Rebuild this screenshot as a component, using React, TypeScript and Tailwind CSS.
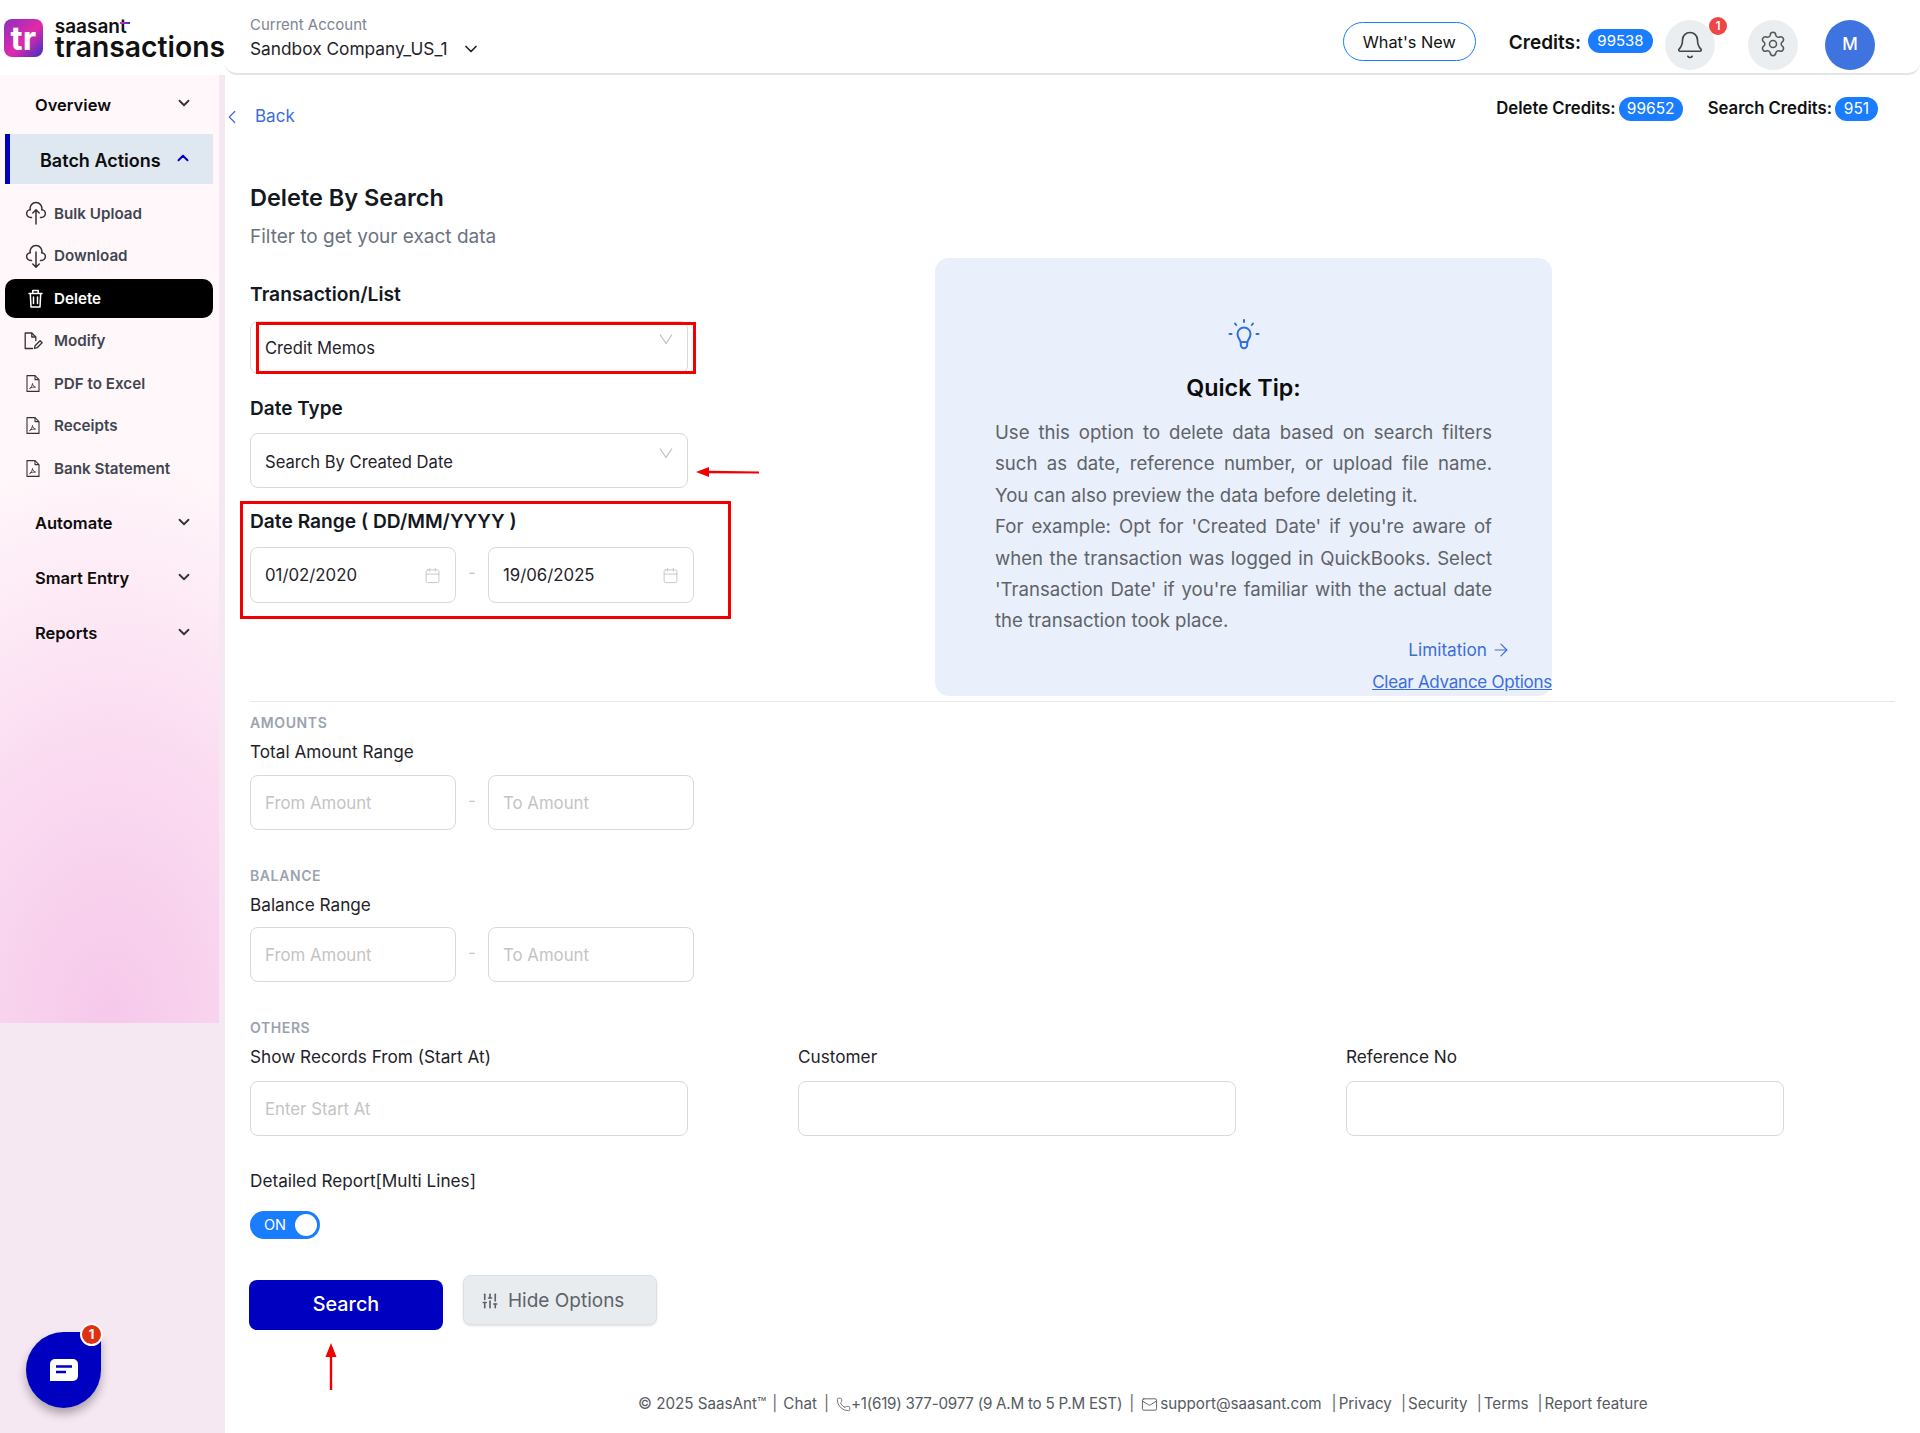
import { Bell, ChevronDown, ChevronLeft, ChevronUp, Calendar, Mail, Phone, Settings, SlidersVertical, ArrowRight } from "lucide-react"
import type { ReactNode } from "react"

const font = "font-['Inter','Liberation_Sans',sans-serif]"

function PdfIcon() {
  return (
    <svg width="14" height="17" viewBox="0 0 14 17" fill="none" stroke="#333" strokeWidth="1.1" strokeLinejoin="round">
      <path d="M1 .6h8l4 4v11.800H1z" />
      <path d="M9 .6v4h4" />
      <path d="M3.600 13.500c1.500-.9 2.800-3.200 2.900-5 .2 1.800 1.200 3.200 3 3.600-2-.2-4.100.2-5.900 1.400z" strokeWidth="0.9" />
    </svg>
  )
}

function CloudIcon({ up }: { up: boolean }) {
  return (
    <svg width="20" height="24" viewBox="0 0 20 24" fill="none" stroke="#333" strokeWidth="1.500" strokeLinecap="round" strokeLinejoin="round">
      <path d="M5.500 16.500H4.800a3.900 3.900 0 0 1-.5-7.800A5.800 5.800 0 0 1 10 1.500a5.800 5.800 0 0 1 5.700 7.200 3.900 3.900 0 0 1-.5 7.800h-.7" />
      {up ? <path d="M10 23V9M6.800 12 10 8.800l3.200 3.200" /> : <path d="M10 8v15M6.800 20 10 23.200l3.200-3.200" />}
    </svg>
  )
}

function TrashIcon() {
  return (
    <svg className="ml-[2px]" width="15" height="19" viewBox="0 0 15 19" fill="none" stroke="#fff" strokeWidth="1.500" strokeLinecap="round" strokeLinejoin="round">
      <path d="M1 4.500h13M4.800 4.500V1.500h5.400v3M2.300 4.500l.7 13.500h9l.7-13.500M5.500 8v6.500M9.500 8v6.500" />
    </svg>
  )
}

function ModifyIcon() {
  return (
    <svg className="ml-[-2px]" width="19" height="18" viewBox="0 0 19 18" fill="none" stroke="#333" strokeWidth="1.300" strokeLinejoin="round">
      <path d="M9 16.500H1.200V1h6.600l4 4v4" />
      <path d="M7.800 1v4h4" />
      <path d="M10.500 16.500l.6-2.800 5-5 2 2-5 5z" />
    </svg>
  )
}

function BulbIcon() {
  return (
    <svg width="32" height="32" viewBox="0 0 32 32" fill="none" stroke="#2f6fe0" strokeWidth="2" strokeLinecap="round" strokeLinejoin="round">
      <path d="M12.500 23c0-2.500-3-3.800-3-8a6.500 6.500 0 0 1 13 0c0 4.200-3 5.500-3 8z" />
      <path d="M12.800 23v3a3.200 3.200 0 0 0 6.400 0v-3" />
      <path d="M16 1v2M7 4.500l1.200 1.500M25 4.500 23.800 6M1.500 15h2M28.500 15h2" />
    </svg>
  )
}

function RowLabel({ children, className = "" }: { children: ReactNode; className?: string }) {
  return <div className={"h-[26px] leading-[26px] text-[17.200px] text-[#1f2329] " + className}>{children}</div>
}

function Section({ children, className = "" }: { children: ReactNode; className?: string }) {
  return <div className={"h-[18px] leading-[18px] text-[14px] font-semibold tracking-[0.6px] text-[#9aa3af] " + className}>{children}</div>
}

function TextBox({ placeholder, className = "" }: { placeholder?: string; className?: string }) {
  return (
    <div className={"flex items-center rounded-[8px] border border-[#d9d9d9] bg-white px-[14px] pt-[3px] text-[16.800px] text-[#c4c4c4] " + className}>
      {placeholder}
    </div>
  )
}

function SelectBox({ value, className = "", chevron = "top-[11px]" }: { value: string; className?: string; chevron?: string }) {
  return (
    <div className={"relative flex w-[438px] items-center rounded-[8px] border border-[#d9d9d9] bg-white px-[14px] text-[16.600px] text-[#1f2329] " + className}>
      {value}
      <svg className={"absolute right-[14px] " + chevron} width="14" height="12" viewBox="0 0 14 12" fill="none" stroke="#bfbfbf" strokeWidth="1.200">
        <path d="M1 1.500 7 10.500 13 1.500" />
      </svg>
    </div>
  )
}

function RangeRow({ a, b }: { a: string; b: string }) {
  return (
    <div className="flex items-center">
      <TextBox placeholder={a} className="h-[55px] w-[206px]" />
      <div className="flex w-[32px] justify-center pb-[6px] text-[#c4c4c4]">-</div>
      <TextBox placeholder={b} className="h-[55px] w-[206px]" />
    </div>
  )
}

function DateBox({ value }: { value: string }) {
  return (
    <div className="flex h-[56px] w-[206px] items-center justify-between rounded-[8px] border border-[#d9d9d9] bg-white pl-[14px] pr-[14px] text-[16.800px] text-[#1f2329]">
      <span className="pt-[2px]">{value}</span>
      <Calendar size={17} strokeWidth={1.300} className="text-[#c4c4c4]" />
    </div>
  )
}

function NavHead({ label }: { label: string }) {
  return (
    <div className="flex h-[50px] items-center justify-between pl-[35px] pr-[26px] text-[16.500px] font-semibold text-[#0c0c0c]">
      {label}
      <ChevronDown size={18} strokeWidth={2.400} className="mb-[4px] text-[#333]" />
    </div>
  )
}

function SubItem({ icon, label, active = false }: { icon: ReactNode; label: string; active?: boolean }) {
  return (
    <div className={"mx-[5px] flex h-[38.500px] w-[208px] items-center rounded-[10px] text-[15.200px] font-semibold " + (active ? "bg-black text-white" : "text-[#3f4650]")}>
      <div className="flex w-[49px] justify-start pl-[21px]">{icon}</div>
      <span className="pt-[2px]">{label}</span>
    </div>
  )
}

function Pill({ children, className = "" }: { children: ReactNode; className?: string }) {
  return <span className={"flex items-center justify-center rounded-full bg-[#1a7cff] font-normal text-white " + className}>{children}</span>
}

export default function App() {
  return (
    <div className={"relative flex h-[1433px] w-[1920px] flex-col overflow-hidden bg-white " + font}>
      <header className="flex h-[75px] shrink-0">
        <div className="flex w-[225px] items-start pl-[4px] pt-[19px]">
          <div className="flex h-[38px] w-[39px] items-center justify-center rounded-[8px] bg-[linear-gradient(135deg,#8b2fc0,#e22aa8_55%,#3a2fc8)] text-[33px] font-bold leading-none text-white">tr</div>
          <div className="ml-[12px] mt-[-1px] flex flex-col">
            <span className="relative h-[17px] w-[74px] text-[19px] font-semibold leading-[17px] text-[#111]">
              saasant
              <span className="absolute left-[65px] top-[4px] h-[2px] w-[10px] bg-[linear-gradient(90deg,#e22aa8,#3a2fc8)]" />
            </span>
            <span className="mt-[1px] h-[23px] text-[28.300px] font-semibold leading-[23px] text-[#111]">transactions</span>
          </div>
        </div>
        <div className="flex flex-1 items-start justify-between rounded-b-[12px] border-b-2 border-[#e5e5e5] pl-[25px] pr-[45px]">
          <div className="pt-[14px]">
            <div className="h-[22px] text-[15px] leading-[22px] text-[#7d8590]">Current Account</div>
            <div className="flex h-[26px] items-center text-[17.300px] text-[#1f2329]">
              Sandbox Company_US_1
              <ChevronDown size={20} strokeWidth={2} className="ml-[13px]" />
            </div>
          </div>
          <div className="flex items-start pt-[20px]">
            <div className="ml-[1px] mt-[2px] flex h-[39px] w-[133px] items-center justify-center rounded-full border border-[#1a7cff] pt-[2px] text-[16.300px] text-[#111]">What&apos;s New</div>
            <span className="ml-[33px] mt-[11px] text-[19px] font-semibold leading-[24px] text-[#111]">Credits:</span>
            <Pill className="ml-[7px] mt-[9px] h-[24px] w-[65px] text-[15px]">99538</Pill>
            <div className="relative ml-[12px] flex h-[50px] w-[50px] items-center justify-center rounded-full bg-[#ebeef0]">
              <Bell size={30} strokeWidth={1.300} className="text-[#444]" />
              <span className="absolute right-[-12px] top-[-3px] flex h-[18px] w-[18px] items-center justify-center rounded-full bg-[#f04545] text-[12px] font-semibold text-white">1</span>
            </div>
            <div className="ml-[33px] flex h-[50px] w-[50px] items-center justify-center rounded-full bg-[#ebeef0] pb-[2px]">
              <Settings size={28} strokeWidth={1.300} className="text-[#555]" />
            </div>
            <div className="ml-[27px] flex h-[50px] w-[50px] items-center justify-center rounded-full bg-[#3f73e0] text-[17px] font-medium text-white">M</div>
          </div>
        </div>
      </header>

      <div className="flex min-h-0 flex-1">
        <aside className="w-[225px] shrink-0 bg-[#f6e8f3]">
          <div className="h-[948px] w-[219px] bg-[radial-gradient(ellipse_170%_60%_at_50%_100%,#f6c8ea_0%,#fbdef2_55%,#fff7fa_100%)] pt-[5px]">
            <NavHead label="Overview" />
            <div className="ml-[5px] mt-[4px] flex h-[50px] w-[208px] items-center justify-between border-l-[5px] border-[#0000c0] bg-[#dfe7f1] pl-[30px] pr-[21px] pt-[2px] text-[18px] font-semibold text-[#0c0c0c]">
              Batch Actions
              <ChevronUp size={18} strokeWidth={2.600} className="mb-[4px] text-[#0000c0]" />
            </div>
            <div className="mt-[10px] flex flex-col gap-[4px]">
              <SubItem icon={<CloudIcon up />} label="Bulk Upload" />
              <SubItem icon={<CloudIcon up={false} />} label="Download" />
              <SubItem icon={<TrashIcon />} label="Delete" active />
              <SubItem icon={<ModifyIcon />} label="Modify" />
              <SubItem icon={<PdfIcon />} label="PDF to Excel" />
              <SubItem icon={<PdfIcon />} label="Receipts" />
              <SubItem icon={<PdfIcon />} label="Bank Statement" />
            </div>
            <div className="mt-[11px] flex flex-col gap-[5px]">
              <NavHead label="Automate" />
              <NavHead label="Smart Entry" />
              <NavHead label="Reports" />
            </div>
          </div>
        </aside>

        <main className="min-w-0 flex-1 pl-[25px] pr-[25px]">
          <div className="flex h-[108px] items-start justify-between pt-[21px] pr-[17px]">
            <div className="ml-[-29px] mt-[8px] flex h-[26px] items-center text-[17px] text-[#3b6ed9]">
              <ChevronLeft size={22} strokeWidth={1.300} />
              <span className="ml-[12px]">Back</span>
            </div>
            <div className="flex items-center text-[16.700px] font-semibold text-[#111]">
              Delete Credits:
              <Pill className="ml-[3px] h-[24px] w-[64px] text-[15.500px]">99652</Pill>
              <span className="ml-[25px]">Search Credits:</span>
              <Pill className="ml-[3px] h-[24px] w-[43px] text-[15.500px]">951</Pill>
            </div>
          </div>

          <div className="flex border-b border-[#e8e8e8] pb-[5px]">
            <div className="w-[685px] shrink-0">
              <h1 className="h-[30px] text-[23.500px] font-semibold leading-[30px] text-[#14181f]">Delete By Search</h1>
              <p className="mt-[11px] h-[26px] text-[19px] leading-[26px] text-[#6b7280]">Filter to get your exact data</p>
              <div className="mt-[31px] h-[26px] text-[19.300px] font-semibold leading-[26px] text-[#14181f]">Transaction/List</div>
              <SelectBox value="Credit Memos" className="mt-[14px] h-[53px] pt-[2px]" />
              <div className="mt-[22px] h-[26px] text-[19px] font-semibold leading-[26px] text-[#14181f]">Date Type</div>
              <SelectBox value="Search By Created Date" chevron="top-[13px]" className="mt-[11px] h-[55px] pt-[4px]" />
              <div className="mt-[20px] h-[26px] text-[19.200px] font-semibold leading-[26px] text-[#14181f]">Date Range ( DD/MM/YYYY )</div>
              <div className="mt-[13px] flex items-center">
                <DateBox value="01/02/2020" />
                <div className="flex w-[32px] justify-center pb-[6px] text-[#c4c4c4]">-</div>
                <DateBox value="19/06/2025" />
              </div>
            </div>
            <div className="mt-[75px] h-[438px] w-[617px] rounded-[14px] bg-[#e9effb]">
              <div className="flex justify-center pt-[61px]">
                <BulbIcon />
              </div>
              <div className="mt-[21px] text-center text-[23.300px] font-semibold leading-[32px] text-[#0c0c0c]">Quick Tip:</div>
              <div className="mx-[60px] mt-[13px] text-justify text-[18.600px] leading-[31.400px] text-[#5f6368]">
                Use this option to delete data based on search filters such as date, reference number, or upload file name. You can also preview the data before deleting it.
                <br />
                For example: Opt for &apos;Created Date&apos; if you&apos;re aware of when the transaction was logged in QuickBooks. Select &apos;Transaction Date&apos; if you&apos;re familiar with the actual date the transaction took place.
              </div>
              <div className="mr-[41px] flex items-center justify-end text-[17.200px] leading-[26px] text-[#3b6ed9]">
                Limitation
                <ArrowRight size={20} strokeWidth={1.400} className="ml-[4px]" />
              </div>
              <div className="mt-[6px] text-right text-[17px] leading-[26px] tracking-[-0.26px] text-[#3b6ed9] underline">Clear Advance Options</div>
            </div>
          </div>

          <Section className="mt-[12px]">AMOUNTS</Section>
          <RowLabel className="mt-[7px]">Total Amount Range</RowLabel>
          <div className="mt-[10px]"><RangeRow a="From Amount" b="To Amount" /></div>
          <Section className="mt-[37px]">BALANCE</Section>
          <RowLabel className="mt-[7px]">Balance Range</RowLabel>
          <div className="mt-[9px]"><RangeRow a="From Amount" b="To Amount" /></div>
          <Section className="mt-[37px]">OTHERS</Section>
          <div className="mt-[7px] grid w-[1535px] grid-cols-[438px_438px_438px] gap-x-[110px]">
            <RowLabel>Show Records From (Start At)</RowLabel>
            <RowLabel>Customer</RowLabel>
            <RowLabel>Reference No</RowLabel>
            <TextBox placeholder="Enter Start At" className="mt-[11px] h-[55px]" />
            <TextBox className="mt-[11px] h-[55px]" />
            <TextBox className="mt-[11px] h-[55px]" />
          </div>
          <RowLabel className="mt-[32px]">Detailed Report[Multi Lines]</RowLabel>
          <div className="mt-[17px] flex h-[28px] w-[70px] items-center justify-between rounded-full bg-[#1a7cff] pl-[14px] pr-[3px] text-[14.500px] text-white">
            ON
            <span className="h-[22px] w-[22px] rounded-full bg-white" />
          </div>
          <div className="mt-[36px] flex items-start">
            <button className="ml-[-1px] mt-[5px] h-[50px] w-[194px] rounded-[8px] bg-[#0000c0] text-[19.800px] font-medium text-white">Search</button>
            <button className="ml-[20px] flex h-[50px] w-[194px] items-center rounded-[8px] border border-[#dde0e3] bg-[#e9ecef] pl-[17px] pt-[2px] text-[19px] text-[#5c636a] shadow-sm">
              <SlidersVertical size={18} strokeWidth={2.200} className="mr-[9px]" />
              Hide Options
            </button>
          </div>
          <footer className="ml-[388px] mt-[61px] flex h-[26px] items-center whitespace-nowrap text-[15.200px] text-[#555b63]">
            © 2025 SaasAnt™ <span className="mx-[6px] text-[#666]">|</span> Chat <span className="mx-[7px] text-[#666]">|</span>
            <Phone size={15} strokeWidth={1.300} />
            <span className="tracking-[-0.25px]">+1(619) 377-0977 (9 A.M to 5 P.M EST)</span>
            <span className="mx-[7px] text-[#666]">|</span>
            <Mail size={17} strokeWidth={1.300} className="mr-[2px]" />support@saasant.com
            <span className="ml-[10px] mr-[2px] text-[#666]">|</span>Privacy
            <span className="ml-[9px] mr-[2px] text-[#666]">|</span>Security
            <span className="ml-[9px] mr-[2px] text-[#666]">|</span>Terms
            <span className="ml-[9px] mr-[2px] text-[#666]">|</span>Report feature
          </footer>
        </main>
      </div>

      {/* red markup drawn over the page */}
      <div className="pointer-events-none absolute left-[256px] top-[322px] h-[52px] w-[440px] border-[3px] border-[#f00000]" />
      <div className="pointer-events-none absolute left-[240px] top-[501px] h-[118px] w-[491px] border-[3px] border-[#f00000]" />
      <svg className="pointer-events-none absolute left-[696px] top-[465px]" width="64" height="14" viewBox="0 0 64 14" fill="#f00000">
        <path d="M0 7 13 2v3.800L63 6.500v2L13 8.300V12z" />
      </svg>
      <svg className="pointer-events-none absolute left-[324px] top-[1343px]" width="14" height="48" viewBox="0 0 14 48" fill="#f00000">
        <path d="M7 0l5.500 14H8.200V47H5.800V14H1.500z" />
      </svg>

      {/* chat bubble */}
      <div className="absolute left-[26px] top-[1332px] flex h-[76px] w-[75px] items-center justify-center rounded-[50%_8%_50%_50%] bg-[#0000c0] shadow-[0_6px_10px_rgba(0,0,0,0.3)]">
        <svg width="28" height="22" viewBox="0 0 28 22">
          <path d="M5 0h18a5 5 0 0 1 5 5v12a5 5 0 0 1-5 5H0V5a5 5 0 0 1 5-5z" fill="#fff" />
          <path d="M6 7.500h16M6 13h10" stroke="#0000c0" strokeWidth="2.500" />
        </svg>
        <span className="absolute right-[-2px] top-[-9px] flex h-[23px] w-[23px] items-center justify-center rounded-full border-2 border-white bg-[#e0300f] text-[13px] font-bold text-white">1</span>
      </div>
    </div>
  )
}
